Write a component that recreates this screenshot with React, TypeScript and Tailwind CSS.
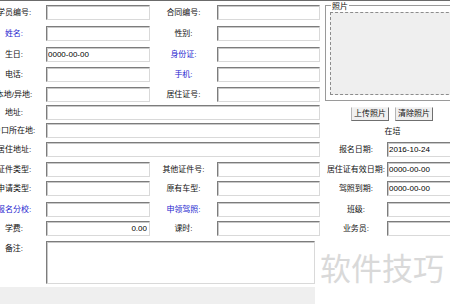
import type { ReactNode } from "react";

const box =
  "h-[15px] shrink-0 border border-t-[#7c7c7c] border-l-[#7c7c7c] border-r-[#d9d9d9] border-b-[#d9d9d9] bg-white px-[1px] text-[8px] leading-[13px] text-black outline-none shadow-[inset_1px_1px_0_#c9c9c9]";

function Box({ w, value = "", right = false }: { w: string; value?: string; right?: boolean }) {
  return <input readOnly defaultValue={value} className={`${box} ${w} ${right ? "pr-[2px] text-right" : ""}`} />;
}

// left labels sit centered in a narrow cell, so long ones run off the left edge like the original
function L({ children, blue = false }: { children: ReactNode; blue?: boolean }) {
  return (
    <span className="flex w-[46px] shrink-0">
      <span className={`flex h-[15px] w-[28px] items-center justify-center whitespace-nowrap ${blue ? "text-[#2626cf]" : ""}`}>
        {children}
      </span>
    </span>
  );
}

function M({ children, blue = false }: { children: ReactNode; blue?: boolean }) {
  return (
    <span className={`flex h-[15px] w-[67px] shrink-0 items-center justify-center whitespace-nowrap ${blue ? "text-[#2626cf]" : ""}`}>
      {children}
    </span>
  );
}

function R({ children }: { children: ReactNode }) {
  return (
    <span className="ml-[5px] flex h-[15px] w-[62px] shrink-0 items-center justify-center whitespace-nowrap">{children}</span>
  );
}

function Btn({ children }: { children: ReactNode }) {
  return (
    <button className="flex h-[14px] w-[38px] items-center justify-center border border-t-[#f4f4f4] border-l-[#b5b5b5] border-r-[#6f6f6f] border-b-[#6f6f6f] bg-[#f0f0f0] text-[8px] leading-none">
      {children}
    </button>
  );
}

export default function App() {
  return (
    <div className="relative h-[304px] w-[450px] overflow-hidden border-t border-[#6b6b6b] bg-white pt-[4px] font-['Liberation_Sans','Noto_Sans_CJK_SC',sans-serif] text-[8px] leading-none text-[#111]">
      <div className="flex w-[480px]">
        <div className="flex w-[320px] shrink-0 flex-col">
          <div className="flex h-[21px] items-start">
            <L>学员编号:</L>
            <Box w="w-[104px]" />
            <M>合同编号:</M>
            <Box w="w-[103px]" />
          </div>
          <div className="flex h-[21px] items-start">
            <L blue>姓名:</L>
            <Box w="w-[104px]" />
            <M>性别:</M>
            <Box w="w-[103px]" />
          </div>
          <div className="flex h-[20px] items-start">
            <L>生日:</L>
            <Box w="w-[104px]" value="0000-00-00" />
            <M blue>身份证:</M>
            <Box w="w-[103px]" />
          </div>
          <div className="flex h-[20px] items-start">
            <L>电话:</L>
            <Box w="w-[104px]" />
            <M blue>手机:</M>
            <Box w="w-[103px]" />
          </div>
          <div className="flex h-[18px] items-start">
            <L>本地/异地:</L>
            <Box w="w-[104px]" />
            <M>居住证号:</M>
            <Box w="w-[103px]" />
          </div>
          <div className="flex h-[18px] items-start">
            <L>地址:</L>
            <Box w="w-[274px]" />
          </div>
          <div className="flex h-[19px] items-start">
            <L>户口所在地:</L>
            <Box w="w-[274px]" />
          </div>
        </div>

        <div className="ml-[5px] flex w-[135px] shrink-0 flex-col">
          <div className="relative h-[96px] w-[150px] border border-[#9a9a9a] pb-[5px] pl-[4px] pt-[6px]">
            <span className="absolute -top-[5px] left-[5px] bg-white px-[1px] leading-[11px]">照片</span>
            <div className="h-full border border-dashed border-[#8c8c8c] bg-[#efefef]" />
          </div>
          <div className="mt-[6px] flex gap-[6px] pl-[26px]">
            <Btn>上传照片</Btn>
            <Btn>清除照片</Btn>
          </div>
          <div className="flex h-[21px] items-center justify-center">在培</div>
        </div>
      </div>

      <div className="flex h-[20px] w-[480px] items-start">
        <L>居住地址:</L>
        <Box w="w-[274px]" />
        <R>报名日期:</R>
        <Box w="w-[85px]" value="2016-10-24" />
      </div>
      <div className="flex h-[19px] w-[480px] items-start">
        <L>证件类型:</L>
        <Box w="w-[104px]" />
        <M>其他证件号:</M>
        <Box w="w-[103px]" />
        <R>居住证有效日期:</R>
        <Box w="w-[85px]" value="0000-00-00" />
      </div>
      <div className="flex h-[21px] w-[480px] items-start">
        <L>申请类型:</L>
        <Box w="w-[104px]" />
        <M>原有车型:</M>
        <Box w="w-[103px]" />
        <R>驾照到期:</R>
        <Box w="w-[85px]" value="0000-00-00" />
      </div>
      <div className="flex h-[19px] w-[480px] items-start">
        <L blue>报名分校:</L>
        <Box w="w-[104px]" />
        <M blue>申领驾照:</M>
        <Box w="w-[103px]" />
        <R>班级:</R>
        <Box w="w-[85px]" />
      </div>
      <div className="flex h-[20px] w-[480px] items-start">
        <L>学费:</L>
        <Box w="w-[104px]" value="0.00" right />
        <M>课时:</M>
        <Box w="w-[103px]" />
        <R>业务员:</R>
        <Box w="w-[85px]" />
      </div>
      <div className="flex h-[46px] items-start">
        <span className="flex w-[46px] shrink-0 pt-[4px]">
          <span className="flex w-[28px] justify-center">备注:</span>
        </span>
        <textarea
          readOnly
          className="h-[43px] w-[269px] resize-none border border-t-[#7c7c7c] border-l-[#7c7c7c] border-r-[#d9d9d9] border-b-[#d9d9d9] bg-white shadow-[inset_1px_1px_0_#c9c9c9] outline-none"
        />
      </div>
      <div className="h-[17px] w-[315px] bg-[#efefef]" />

      <span className="pointer-events-none absolute left-[320px] top-[250px] font-['Noto_Sans_CJK_SC',sans-serif] text-[31px] leading-none text-[#d9d9d9]">
        软件技巧
      </span>
    </div>
  );
}
